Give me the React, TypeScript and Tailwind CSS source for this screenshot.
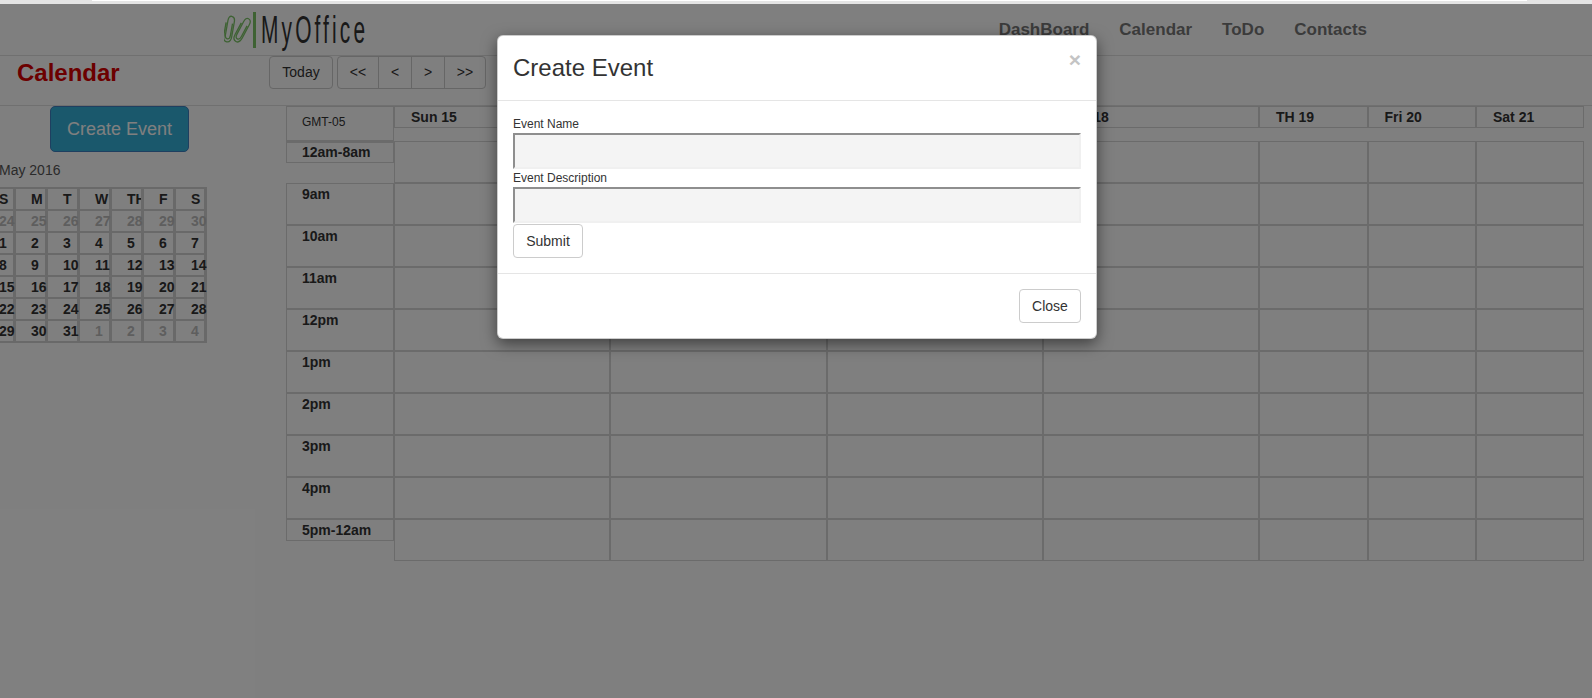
const days = [
  { label: "Sun 15", w: "w-[215.5px]" },
  { label: "Mon 16", w: "w-[217px]" },
  { label: "Tue 17", w: "w-[216.5px]" },
  { label: "Wed 18", w: "w-[216px]" },
  { label: "TH 19", w: "w-[108.5px]" },
  { label: "Fri 20", w: "w-[108.5px]" },
  { label: "Sat 21", w: "w-[107.5px]" },
];

const hours = ["9am", "10am", "11am", "12pm", "1pm", "2pm", "3pm", "4pm"];
const weekdays = ["S", "M", "T", "W", "TH", "F", "S"];
const monthDays: { d: number; off?: boolean }[] = [
  ...[24, 25, 26, 27, 28, 29, 30].map((d) => ({ d, off: true })),
  ...Array.from({ length: 31 }, (_, i) => ({ d: i + 1 })),
  ...[1, 2, 3, 4].map((d) => ({ d, off: true })),
];

function Clip({ x, y, angle }: { x: number; y: number; angle: number }) {
  return (
    <g transform={`translate(${x} ${y}) rotate(${angle} 5 13)`}>
      <path
        d="M1 7 V20 Q1 26 5 26 Q9 26 9 20 V5 Q9 0 5.5 0 Q2.5 0 2.5 5 V19 Q2.5 23 5 23 Q7.5 23 7.5 19 V7"
        fill="none"
        stroke="#7cc466"
        strokeWidth="1.3"
      />
    </g>
  );
}

function Logo() {
  return (
    <div className="flex items-center">
      <svg width="28" height="36" viewBox="0 0 28 36" className="mr-[1px]">
        <Clip x={0} y={4} angle={10} />
        <Clip x={13} y={5} angle={28} />
      </svg>
      <div className="w-[3px] h-[36px] bg-[#7cc466] mr-[5px]" />
      <span className="w-[104px] block origin-left scale-x-[0.55] text-[38px] leading-[36px] tracking-[0.15em] font-normal text-[#333] whitespace-nowrap">
        MyOffice
      </span>
    </div>
  );
}

function MiniCalendar() {
  return (
    <div className="grid grid-cols-[repeat(6,32px)_31px] w-[223px] -ml-[16px] mt-[7px] border-t-2 border-[#d2d2d2] text-[14px] font-bold text-[#333]">
      {weekdays.map((w, i) => (
        <div
          key={i}
          className="h-[22px] leading-[20px] pl-[15px] border-r-[3px] border-b-2 border-[#d2d2d2] overflow-hidden whitespace-nowrap"
        >
          {w}
        </div>
      ))}
      {monthDays.map((c, i) => (
        <div
          key={i}
          className={`h-[22px] leading-[20px] pl-[15px] border-r-[3px] border-b-2 border-[#d2d2d2] whitespace-nowrap ${
            c.off ? "text-[#bcbcbc]" : ""
          }`}
        >
          {c.d}
        </div>
      ))}
    </div>
  );
}

function RowCells() {
  return (
    <div className="flex h-[42px]">
      {days.map((d) => (
        <div key={d.label} className={`${d.w} border border-[#d6d6d6]`} />
      ))}
    </div>
  );
}

function WeekGrid() {
  return (
    <div className="flex">
      <div className="w-[108px] text-[14px] font-bold text-[#333]">
        <div className="h-[35px] border border-[#d6d6d6] pl-[15px] pt-[7px] text-[12px] leading-[16px] font-normal">
          GMT-05
        </div>
        <div className="h-[42px]">
          <div className="h-[22px] border border-t-2 border-[#d6d6d6] pl-[15px] leading-[19px]">12am-8am</div>
        </div>
        {hours.map((h) => (
          <div key={h} className="h-[42px] border border-[#d6d6d6] pl-[15px] leading-[20px]">
            {h}
          </div>
        ))}
        <div className="h-[22px] border border-[#d6d6d6] pl-[15px] leading-[20px]">5pm-12am</div>
      </div>
      <div>
        <div className="flex h-[22px] mb-[13px] text-[14px] font-bold text-[#333]">
          {days.map((d) => (
            <div key={d.label} className={`${d.w} border border-[#d6d6d6] pl-[16px] leading-[20px]`}>
              {d.label}
            </div>
          ))}
        </div>
        {Array.from({ length: 10 }, (_, i) => (
          <RowCells key={i} />
        ))}
      </div>
    </div>
  );
}

function CreateEventModal() {
  return (
    <div className="absolute left-[497px] top-[31px] w-[600px] h-[304px] bg-white rounded-[6px] border border-black/20 shadow-[0_5px_15px_rgba(0,0,0,0.5)] text-[#333]">
      <div className="h-[65px] px-[15px] pt-[15px] border-b border-[#e5e5e5] relative">
        <h4 className="text-[24px] leading-[33px] text-[#333]">Create Event</h4>
        <span className="absolute right-[15px] top-[12px] text-[21px] leading-[24px] font-bold text-[#c4c4c4]">×</span>
      </div>
      <div className="px-[15px] pt-[15px] pb-[15px] border-b border-[#e5e5e5] text-[12px]">
        <div className="h-[17px] leading-[17px]">Event Name</div>
        <input className="block w-full h-[36px] bg-[#f4f4f4] border-2 border-t-[#8e8e8e] border-l-[#8e8e8e] border-r-[#f0f0f0] border-b-[#f0f0f0]" />
        <div className="h-[18px] leading-[18px]">Event Description</div>
        <input className="block w-full h-[36px] bg-[#f4f4f4] border-2 border-t-[#8e8e8e] border-l-[#8e8e8e] border-r-[#f0f0f0] border-b-[#f0f0f0]" />
        <button className="block mt-[1px] w-[70px] h-[34px] border border-[#ccc] rounded-[4px] bg-white text-[14px] text-[#333]">
          Submit
        </button>
      </div>
      <div className="flex justify-end p-[15px]">
        <button className="w-[62px] h-[34px] border border-[#ccc] rounded-[4px] bg-white text-[14px] text-[#333]">
          Close
        </button>
      </div>
    </div>
  );
}

export default function App() {
  return (
    <div className="h-[698px] overflow-hidden bg-white font-['Liberation_Sans',Arial,sans-serif]">
      <div className="h-[4px] bg-[#e4e4e4]">
        <div className="h-[1px] ml-[92px] mr-[65px] bg-white" />
      </div>
      <div className="relative h-[694px]">
        <div className="flex items-center justify-between h-[52px] pl-[224px] pr-[225px] border-b border-[#e0e0e0]">
          <Logo />
          <nav className="flex gap-[30px] text-[17px] font-bold text-[#777]">
            <span>DashBoard</span>
            <span>Calendar</span>
            <span>ToDo</span>
            <span>Contacts</span>
          </nav>
        </div>
        <div className="flex h-[50px] pl-[17px] border-b border-[#e0e0e0]">
          <h2 className="w-[252px] text-[24px] leading-[33px] font-bold text-[#d80000]">Calendar</h2>
          <button className="w-[64px] h-[33px] border border-[#ccc] rounded-[4px] text-[14px] text-[#333]">Today</button>
          <div className="flex ml-[4px] h-[33px] border border-[#ccc] rounded-[4px] text-[14px] text-[#333]">
            <button className="w-[41px] border-r border-[#ccc]">{"<<"}</button>
            <button className="w-[33px] border-r border-[#ccc]">{"<"}</button>
            <button className="w-[33px] border-r border-[#ccc]">{">"}</button>
            <button className="w-[40px]">{">>"}</button>
          </div>
        </div>
        <div className="flex">
          <aside className="w-[286px] shrink-0">
            <button className="block ml-[50px] w-[139px] h-[46px] bg-[#35b0d8] border border-[#3f7fc0] rounded-[5px] text-[18px] text-white">
              Create Event
            </button>
            <div className="mt-[8px] -ml-[1px] text-[14px] leading-[20px] text-[#555]">May 2016</div>
            <MiniCalendar />
          </aside>
          <WeekGrid />
        </div>
        <div className="absolute inset-0 bg-black/50" />
        <CreateEventModal />
      </div>
    </div>
  );
}
